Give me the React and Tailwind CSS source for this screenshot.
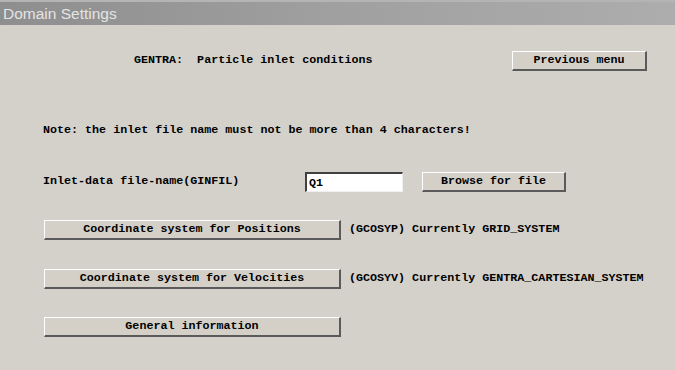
import React, { useState } from "react";

const mono = { fontFamily: '"Liberation Mono", "DejaVu Sans Mono", monospace' };

const RaisedButton = ({ label, className = "" }) => (
  <button
    className={`h-[20px] bg-[#d4d0c8] border-t border-l border-t-white border-l-white border-b-2 border-r-2 border-b-[#5a5a5a] border-r-[#5a5a5a] text-[11.7px] font-bold text-black leading-none flex items-center justify-center ${className}`}
    style={mono}
  >
    {label}
  </button>
);

const App = () => {
  const [fileName, setFileName] = useState("Q1");

  return (
    <div className="w-[675px] h-[370px] overflow-hidden bg-[#d4d1cb] text-black" style={mono}>
      {/* title bar */}
      <div className="h-[25px] border-t-2 border-t-[#b4b4b4] bg-gradient-to-r from-[#8e8e8e] via-[#a0a0a0] to-[#adadad] flex items-center pl-[3px]">
        <span
          className="text-[15.5px] text-[#e4e4e4] leading-none"
          style={{ fontFamily: '"Liberation Sans", Arial, sans-serif' }}
        >
          Domain Settings
        </span>
      </div>

      <div className="flex flex-col">
        <div className="mt-[26px] h-[20px] flex items-center">
          <span className="pl-[134px] text-[11.7px] font-bold whitespace-pre">
            GENTRA:  Particle inlet conditions
          </span>
          <RaisedButton label="Previous menu" className="ml-auto mr-[28px] w-[135px]" />
        </div>

        <div className="mt-[53px] h-[14px] pl-[43px] flex items-center text-[11.7px] font-bold whitespace-pre">
          Note: the inlet file name must not be more than 4 characters!
        </div>

        <div className="mt-[34px] h-[20px] flex items-center pl-[43px]">
          <span className="w-[262px] text-[11.7px] font-bold">Inlet-data file-name(GINFIL)</span>
          <input
            value={fileName}
            onChange={(e) => setFileName(e.target.value)}
            className="w-[98px] h-[20px] bg-white border-t-2 border-l-2 border-t-[#404040] border-l-[#404040] border-b border-r border-b-[#f0f0f0] border-r-[#f0f0f0] px-[2px] text-[11.7px] font-bold outline-none"
            style={mono}
          />
          <RaisedButton label="Browse for file" className="ml-[19px] w-[144px]" />
        </div>

        <div className="mt-[28px] h-[20px] flex items-center pl-[44px]">
          <RaisedButton label="Coordinate system for Positions" className="w-[297px]" />
          <span className="ml-[8px] text-[11.7px] font-bold whitespace-pre">(GCOSYP) Currently GRID_SYSTEM</span>
        </div>

        <div className="mt-[29px] h-[20px] flex items-center pl-[44px]">
          <RaisedButton label="Coordinate system for Velocities" className="w-[297px]" />
          <span className="ml-[8px] text-[11.7px] font-bold whitespace-pre">(GCOSYV) Currently GENTRA_CARTESIAN_SYSTEM</span>
        </div>

        <div className="mt-[28px] h-[20px] flex items-center pl-[44px]">
          <RaisedButton label="General information" className="w-[297px]" />
        </div>
      </div>
    </div>
  );
};

export default App;
